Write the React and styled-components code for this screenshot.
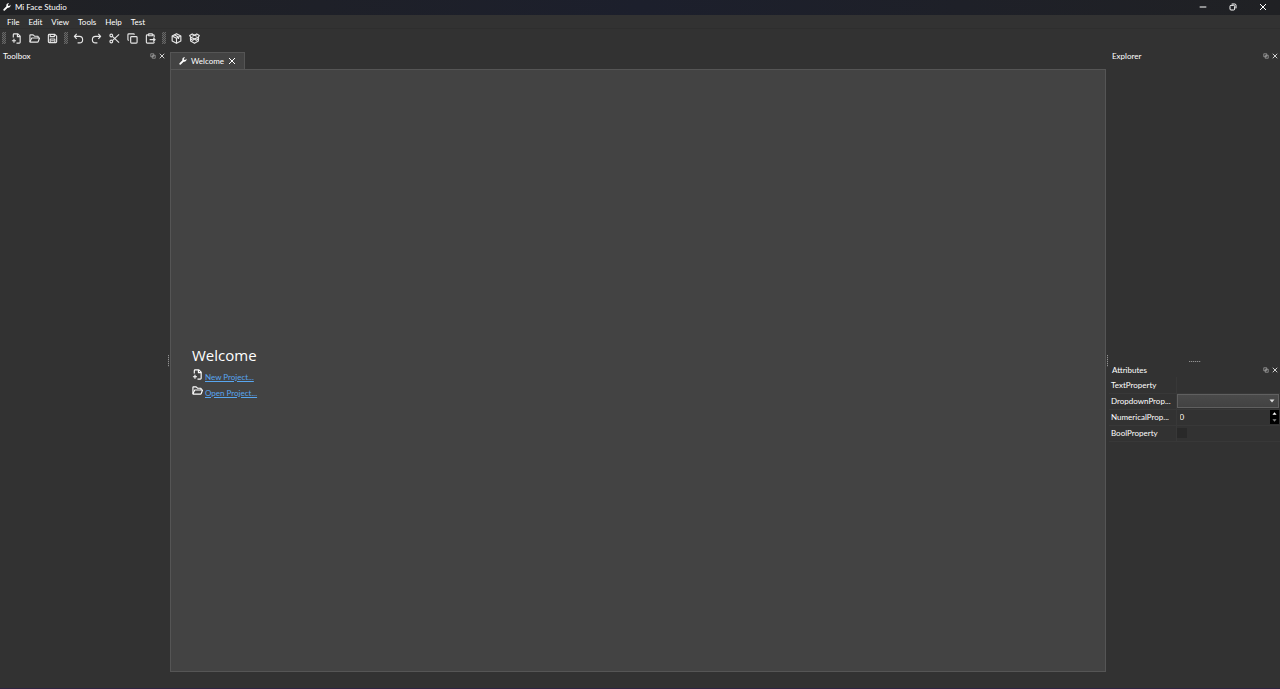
import * as React from 'react'
import styled, { createGlobalStyle } from 'styled-components'

const GlobalStyle = createGlobalStyle`
	* {
		box-sizing: border-box;
	}

	body {
		margin: 0;
		background: #323232;
		color: #fff;
		font-family: Lato, 'Open Sans', sans-serif;
		font-size: 8px;
		line-height: 12px;
	}

	button,
	input,
	select {
		margin: 0;
		padding: 0;
		border: 0;
		background: none;
		color: inherit;
		font: inherit;
	}
`

const Window = styled.div`
	display: flex;
	flex-direction: column;
	height: 100vh;
	border-bottom: 1px solid #2f2540;
`

const TitleBar = styled.header`
	display: flex;
	align-items: center;
	gap: 4px;
	height: 15px;
	padding: 0 2px 1px 3px;
	background: linear-gradient(90deg, #202124, #1c1f2c 50%, #202124);
`

const AppTitle = styled.span`
	flex: 1;
`

const WindowButton = styled.button`
	display: flex;
	align-items: center;
	justify-content: center;
	width: 30px;
	height: 14px;
`

const WindowButtons = styled.div`
	display: flex;
`

const MenuBar = styled.nav`
	display: flex;
	align-items: center;
	gap: 1px;
	height: 14px;
	padding-left: 3px;
	border-bottom: 1px solid #2e2e2e;
`

const MenuItem = styled.button`
	padding: 0 4px;
`

const ToolBar = styled.div`
	display: flex;
	align-items: center;
	gap: 3px;
	height: 20px;
	padding: 0 0 2px 2px;
`

const ToolGroup = styled.div`
	display: flex;
	align-items: center;
`

const Grip = styled.span`
	width: 4px;
	height: 12px;
	margin-right: 1px;
	background: repeating-conic-gradient(#686868 0 25%, #3e3e3e 0 50%) 0 0 / 2px 2px;
`

const ToolButton = styled.button`
	display: flex;
	align-items: center;
	justify-content: center;
	width: 18px;
	height: 18px;
	color: #e6e6e6;
`

const Workspace = styled.div`
	display: flex;
	flex: 1;
	min-height: 0;
`

const StatusBar = styled.footer`
	height: 15px;
`

const LeftDock = styled.aside`
	width: 167px;
`

const RightDock = styled.aside`
	display: flex;
	flex-direction: column;
	width: 171px;
`

const Splitter = styled.div`
	display: flex;
	align-items: center;
	justify-content: center;
	flex: none;
	${p => (p.$row ? 'height: 4px;' : 'width: 3px;')}

	&::before {
		content: '';
		width: ${p => (p.$row ? '12px' : '1px')};
		height: ${p => (p.$row ? '1px' : '12px')};
		background: repeating-linear-gradient(
			${p => (p.$row ? '90deg' : '180deg')},
			#909090 0 1px,
			#484848 1px 2px
		);
	}
`

const Panel = styled.section`
	flex: 1;
	min-height: 0;
`

const PanelHeader = styled.div`
	display: flex;
	align-items: center;
	height: 14px;
	padding: 0 2px 0 3px;
`

const PanelTitle = styled.h2`
	flex: 1;
	margin: 0;
	font-size: 8px;
	font-weight: 400;
`

const PanelButton = styled.button`
	display: flex;
	align-items: center;
	justify-content: center;
	width: ${p => (p.$wide ? '12px' : '6px')};
	height: 10px;
	color: #d0d0d0;
`

const Center = styled.main`
	display: flex;
	flex: 1;
	flex-direction: column;
	min-width: 0;
	padding: 3px 0 1px;
`

const Tab = styled.div`
	display: flex;
	align-items: center;
	align-self: flex-start;
	gap: 4px;
	height: 18px;
	margin-bottom: -1px;
	padding: 0 8px 1px;
	border: 1px solid #555;
	border-bottom: 0;
	background: #434343;
`

const TabClose = styled.button`
	display: flex;
`

const Page = styled.div`
	display: flex;
	flex: 1;
	flex-direction: column;
	justify-content: center;
	padding: 4px 21px 0;
	border: 1px solid #555;
	background: #434343;
`

const Heading = styled.h1`
	margin: 0 0 4px;
	font-family: 'Open Sans', sans-serif;
	font-size: 15px;
	font-weight: 400;
	line-height: 20px;
`

const Shortcut = styled.div`
	display: flex;
	align-items: flex-start;
	gap: 2px;
	height: 16px;
`

const ShortcutLink = styled.a`
	padding-top: 2px;
	color: #58a6f0;
	text-decoration: underline;
`

const Properties = styled.table`
	width: 100%;
	border-collapse: collapse;
	table-layout: fixed;
`

const PropertyName = styled.th`
	width: 67px;
	height: 16px;
	padding: 0 0 0 2px;
	border-right: 1px solid #383838;
	border-bottom: 1px solid #383838;
	font-weight: 400;
	text-align: left;
	white-space: nowrap;
`

const PropertyValue = styled.td`
	height: 16px;
	padding: 0 1px 0 0;
	border-bottom: 1px solid #383838;
`

const TextField = styled.input`
	display: block;
	width: 100%;
	height: 14px;
	padding-left: 3px;
	outline: 0;
`

const SelectWrap = styled.div`
	display: flex;
	align-items: center;
	height: 14px;
	padding-right: 3px;
	border: 1px solid #606060;
	background: linear-gradient(#4a4a4a, #424242);
	color: #ddd;
`

const Select = styled.select`
	flex: 1;
	min-width: 0;
	height: 12px;
	appearance: none;
	outline: 0;
`

const NumberField = styled.div`
	display: flex;
	height: 14px;
`

const Spin = styled.div`
	display: flex;
	flex-direction: column;
	width: 9px;
	background: #000;
`

const SpinButton = styled.button`
	display: flex;
	align-items: center;
	justify-content: center;
	width: 9px;
	height: 7px;
	color: ${p => (p.$dim ? '#888' : '#fff')};
`

const CheckBox = styled.input`
	display: block;
	width: 10px;
	height: 10px;
	appearance: none;
	background: #292929;

	&:checked {
		background: #58a6f0;
	}
`

const paths = {
	newFile: (
		<>
			<path d="M5 10V4q0-2 2-2h8l5 5v13q0 2-2 2h-6" />
			<path d="M14 2v6h6M2 17h9M6.500 12.500v9" />
		</>
	),
	open: (
		<>
			<path d="M2 19V5q0-1 1-1h6l3 3h7q1 0 1 1v3" />
			<path d="M2 19l4-8h17l-3 8q-.5 1-1.500 1H3q-1 0-1-1z" />
		</>
	),
	save: (
		<>
			<path d="M3 5q0-2 2-2h12l4 4v12q0 2-2 2H5q-2 0-2-2z" />
			<path d="M7 3v5h9V3M7 21v-8h10v8M9 17h6" />
		</>
	),
	undo: <path d="M8 2L3 7.500 8 13M3 7.500h11q7 0 7 7t-7 7h-4" />,
	redo: <path d="M16 2l5 5.500-5 5.500M21 7.500H10q-7 0-7 7t7 7h4" />,
	cut: (
		<>
			<circle cx="5" cy="5.500" r="3" />
			<circle cx="5" cy="18.500" r="3" />
			<path d="M7.500 7.500L22 21M22 3L7.500 16.500" />
		</>
	),
	copy: (
		<>
			<rect x="8" y="8" width="14" height="14" rx="2" />
			<path d="M4 16q-2 0-2-2V4q0-2 2-2h10q2 0 2 2" />
		</>
	),
	paste: (
		<>
			<path d="M20 10V6q0-2-2-2h-2M8 4H5Q3 4 3 6v14q0 2 2 2h13q2 0 2-2v-1" />
			<path d="M8 2h8v4H8zM10 14.500h12M18 10.500l4 4-4 4" />
		</>
	),
	cube: (
		<>
			<path d="M12 1.500l9.500 5v11l-9.500 5-9.500-5v-11z" />
			<path d="M2.500 6.500l9.500 5 9.500-5M12 11.500v11M7 4l9.500 5v4" />
		</>
	),
	package: (
		<>
			<path d="M12 5L7 2 1.500 5.500 3.500 9v8.500l8.500 5 8.500-5V9l2-3.500L17 2z" />
			<path d="M3.500 9L12 13l8.500-4M2 12l6 4 4-3 4 3 6-4M7 7l5-2 5 2" />
		</>
	),
	wrench: (
		<path
			fill="currentColor"
			stroke="none"
			d="M22.500 5.500l-4 3.500-3.500-.5-.5-3.500L18 1.200C14 0 9.500 3 10 8c0 1 .2 1.500.4 2L1.500 18.500c-2 2.500 1.500 6 4 4L14 14c5 1.500 9.700-3.500 8.500-8.500z"
		/>
	),
	close: <path d="M3 3l18 18M21 3L3 21" />,
	minimize: <path d="M2 12h20" />,
	restore: (
		<>
			<rect x="3" y="7" width="14" height="14" rx="3" />
			<path d="M8 3h9q4 0 4 4v9" />
		</>
	),
	float: (
		<>
			<rect x="3" y="3" width="12" height="12" />
			<rect x="9" y="9" width="12" height="12" />
		</>
	),
	up: <path fill="currentColor" stroke="none" d="M2 18L12 6l10 12z" />,
	down: <path fill="currentColor" stroke="none" d="M2 6l10 12L22 6z" />,
}

const Icon = ({ name, size = 11, weight = 3 }) => (
	<svg
		width={size}
		height={size}
		viewBox="0 0 24 24"
		fill="none"
		stroke="currentColor"
		strokeWidth={weight}
		strokeLinejoin="round"
		aria-hidden="true"
	>
		{paths[name]}
	</svg>
)

const menus = ['File', 'Edit', 'View', 'Tools', 'Help', 'Test']

const tools = [
	[['newFile', 'New'], ['open', 'Open'], ['save', 'Save']],
	[['undo', 'Undo'], ['redo', 'Redo'], ['cut', 'Cut'], ['copy', 'Copy'], ['paste', 'Paste']],
	[['cube', 'Build'], ['package', 'Package']],
]

const Header = ({ title }) => (
	<PanelHeader>
		<PanelTitle>{title}</PanelTitle>
		<PanelButton $wide aria-label={`Float ${title}`}>
			<Icon name="float" size={6} weight={2} />
		</PanelButton>
		<PanelButton aria-label={`Close ${title}`}>
			<Icon name="close" size={6} weight={4} />
		</PanelButton>
	</PanelHeader>
)

const Attributes = () => {
	const [count, setCount] = React.useState(0)
	return (
		<Properties>
			<tbody>
				<tr>
					<PropertyName scope="row">
						<label htmlFor="text">TextProperty</label>
					</PropertyName>
					<PropertyValue>
						<TextField id="text" />
					</PropertyValue>
				</tr>
				<tr>
					<PropertyName scope="row">
						<label htmlFor="dropdown">DropdownProp...</label>
					</PropertyName>
					<PropertyValue>
						<SelectWrap>
							<Select id="dropdown" />
							<Icon name="down" size={6} />
						</SelectWrap>
					</PropertyValue>
				</tr>
				<tr>
					<PropertyName scope="row">
						<label htmlFor="number">NumericalProp...</label>
					</PropertyName>
					<PropertyValue>
						<NumberField>
							<TextField
								id="number"
								inputMode="numeric"
								value={count}
								onChange={e => setCount(Number(e.target.value) || 0)}
							/>
							<Spin>
								<SpinButton aria-label="Increase" onClick={() => setCount(count + 1)}>
									<Icon name="up" size={5} />
								</SpinButton>
								<SpinButton $dim aria-label="Decrease" onClick={() => setCount(count - 1)}>
									<Icon name="down" size={5} />
								</SpinButton>
							</Spin>
						</NumberField>
					</PropertyValue>
				</tr>
				<tr>
					<PropertyName scope="row">
						<label htmlFor="bool">BoolProperty</label>
					</PropertyName>
					<PropertyValue>
						<CheckBox id="bool" type="checkbox" />
					</PropertyValue>
				</tr>
			</tbody>
		</Properties>
	)
}

const App = () => (
	<>
		<GlobalStyle />
		<Window>
			<TitleBar>
				<Icon name="wrench" size={8} />
				<AppTitle>Mi Face Studio</AppTitle>
				<WindowButtons>
					<WindowButton aria-label="Minimize">
						<Icon name="minimize" size={8} />
					</WindowButton>
					<WindowButton aria-label="Restore">
						<Icon name="restore" size={8} />
					</WindowButton>
					<WindowButton aria-label="Close">
						<Icon name="close" size={8} />
					</WindowButton>
				</WindowButtons>
			</TitleBar>
			<MenuBar>
				{menus.map(name => (
					<MenuItem key={name}>{name}</MenuItem>
				))}
			</MenuBar>
			<ToolBar>
				{tools.map((group, i) => (
					<ToolGroup key={i}>
						<Grip />
						{group.map(([icon, label]) => (
							<ToolButton key={icon} aria-label={label}>
								<Icon name={icon} weight={2.5} />
							</ToolButton>
						))}
					</ToolGroup>
				))}
			</ToolBar>
			<Workspace>
				<LeftDock>
					<Header title="Toolbox" />
				</LeftDock>
				<Splitter />
				<Center>
					<Tab>
						<Icon name="wrench" size={8} />
						<span>Welcome</span>
						<TabClose aria-label="Close tab">
							<Icon name="close" size={8} />
						</TabClose>
					</Tab>
					<Page>
						<Heading>Welcome</Heading>
						<Shortcut>
							<Icon name="newFile" weight={2.5} />
							<ShortcutLink href="#new">New Project...</ShortcutLink>
						</Shortcut>
						<Shortcut>
							<Icon name="open" weight={2.5} />
							<ShortcutLink href="#open">Open Project...</ShortcutLink>
						</Shortcut>
					</Page>
				</Center>
				<Splitter />
				<RightDock>
					<Panel>
						<Header title="Explorer" />
					</Panel>
					<Splitter $row />
					<Panel>
						<Header title="Attributes" />
						<Attributes />
					</Panel>
				</RightDock>
			</Workspace>
			<StatusBar />
		</Window>
	</>
)

export default App
